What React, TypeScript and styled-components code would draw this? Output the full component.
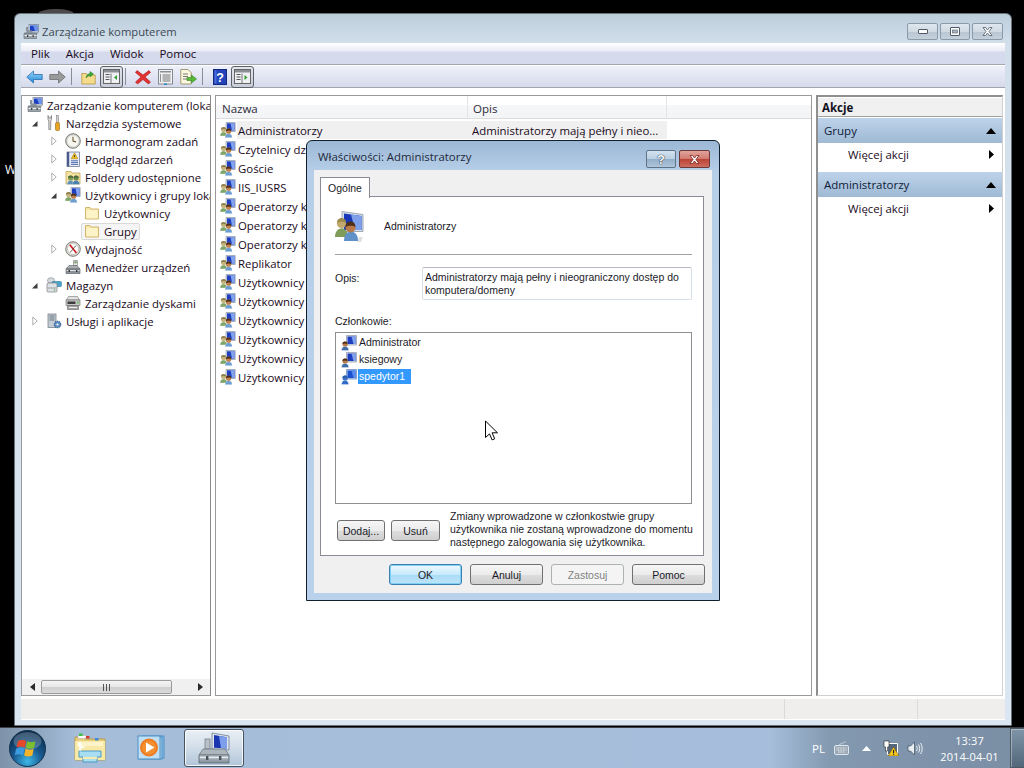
import React from "react";
import styled, { createGlobalStyle } from "styled-components";

const FONT = `"Open Sans", "Noto Sans", "Liberation Sans", sans-serif`;
const DIALOG_FONT = `"Liberation Sans", Arial, sans-serif`;

const Global = createGlobalStyle`
  html, body { margin: 0; padding: 0; background: #000; }
  body { width: 1024px; height: 768px; overflow: hidden; font-family: ${FONT}; }
`;

/* ---------- desktop ---------- */
const Desktop = styled.div`
  width: 1024px;
  height: 768px;
  position: relative;
  display: flex;
  flex-direction: column;
  background: #000;
  overflow: hidden;
`;
const Canvas = styled.div`
  flex: 1;
  position: relative;
`;
const DesktopLabel = styled.span`
  position: absolute;
  left: 5px;
  top: 162px;
  color: #fff;
  font-size: 12px;
  line-height: 16px;
`;
const HiddenShape = styled.div`
  position: absolute;
  left: 38px;
  top: 9px;
  width: 36px;
  height: 8px;
  border-radius: 18px 18px 0 0 / 5px 5px 0 0;
  background: #4a4a4a;
`;

/* ---------- main window ---------- */
const Win = styled.div`
  position: absolute;
  left: 14px;
  top: 13px;
  width: 998px;
  height: 713px;
  box-sizing: border-box;
  border: 1px solid #6b7178;
  border-radius: 6px 6px 0 0;
  background: linear-gradient(180deg, #bccdda 0, #d3e0ec 30px, #dae6f2 100%);
  padding: 0 6px 5px 6px;
  display: flex;
  flex-direction: column;
`;
const TitleBar = styled.div`
  height: 29px;
  flex: none;
  box-sizing: border-box;
  display: flex;
  align-items: flex-start;
  padding: 9px 0 0 2px;
  gap: 3px;
`;
const TitleIcon = styled.div`
  display: flex;
  margin-top: 1px;
`;
const TitleText = styled.span`
  font-size: 11.25px;
  line-height: 16px;
  margin-top: 1px;
  color: #3e4a55;
  flex: 1;
`;
const CaptionGroup = styled.div`
  display: flex;
  gap: 2px;
  margin-right: 2px;
`;
const CaptionBtn = styled.div<{ $w?: number }>`
  width: ${(p) => p.$w ?? 30}px;
  height: 17px;
  box-sizing: border-box;
  border: 1px solid #8b9aa8;
  border-radius: 2px;
  background: linear-gradient(180deg, #dfe7ee 0, #cfdae3 50%, #b9c6d2 51%, #c4d0da 100%);
  display: flex;
  align-items: center;
  justify-content: center;
`;
const Inner = styled.div`
  flex: 1;
  display: flex;
  flex-direction: column;
  background: #fff;
  min-height: 0;
`;
const MenuBar = styled.div`
  height: 22px;
  flex: none;
  display: flex;
  align-items: center;
  box-sizing: border-box;
  border-bottom: 1px solid #a3a6ad;
  background: linear-gradient(180deg, #ffffff 0, #eaecf6 8px, #d5daec 9px, #d5daec 100%);
  padding-left: 10px;
  gap: 16px;
  font-size: 11.5px;
  color: #1a0a22;
`;
const MenuItem = styled.span``;
const ToolBar = styled.div`
  height: 23px;
  flex: none;
  box-sizing: border-box;
  border-top: 1px solid #fff;
  border-bottom: 1px solid #a3a6ad;
  background: linear-gradient(180deg, #eff1f9 0, #d5daec 100%);
  display: flex;
  align-items: center;
  padding-left: 2px;
`;
const ToolBtn = styled.div<{ $on?: boolean }>`
  width: 23px;
  height: 22px;
  box-sizing: border-box;
  flex: none;
  display: flex;
  align-items: center;
  justify-content: center;
  ${(p) =>
    p.$on
      ? `border: 1px solid #5d6168; border-radius: 3px; background: linear-gradient(180deg,#e4e5ec,#c7ccd9);`
      : ""}
`;
const ToolSep = styled.div`
  width: 1px;
  height: 17px;
  flex: none;
  background: #8a8d96;
  margin: 0 5px 0 2px;
`;
const Panes = styled.div`
  flex: 1;
  min-height: 0;
  display: flex;
  padding: 7px 2px 2px 0;
  gap: 4px;
`;
const TreePane = styled.div`
  width: 190px;
  flex: none;
  box-sizing: border-box;
  border: 1px solid #9a9a9a;
  border-right-color: #8a8a8a;
  display: flex;
  flex-direction: column;
  overflow: hidden;
`;
const TreeBody = styled.div`
  flex: 1;
  overflow: hidden;
`;
const TreeRow = styled.div<{ $indent: number }>`
  height: 18px;
  display: flex;
  align-items: center;
  padding-left: ${(p) => p.$indent}px;
  white-space: nowrap;
  font-size: 11.4px;
  color: #1a0a22;
`;
const Twist = styled.div`
  width: 19px;
  flex: none;
  display: flex;
  justify-content: center;
  padding-right: 4px;
  box-sizing: border-box;
`;
const TreeNode = styled.div<{ $sel?: boolean }>`
  display: flex;
  align-items: center;
  gap: 4px;
  height: 17px;
  box-sizing: border-box;
  ${(p) =>
    p.$sel
      ? `background:#f5f5f5;border:1px solid #d9d9d9;border-radius:2px;padding:0 2px 0 2px;margin-left:-3px;`
      : ""}
`;
const HScroll = styled.div`
  height: 16px;
  flex: none;
  background: #f0f0f0;
  display: flex;
  align-items: center;
  padding: 0 1px;
`;
const ScrollEnd = styled.div`
  width: 18px;
  flex: none;
  display: flex;
  align-items: center;
  justify-content: center;
`;
const ScrollThumb = styled.div`
  width: 131px;
  height: 14px;
  flex: none;
  box-sizing: border-box;
  border: 1px solid #9b9b9b;
  border-radius: 2px;
  background: linear-gradient(180deg, #f4f4f4 0, #e6e6e6 50%, #cfcfcf 51%, #dadada 100%);
  display: flex;
  align-items: center;
  justify-content: center;
  gap: 1px;
`;
const ThumbTick = styled.i`
  width: 1px;
  height: 7px;
  background: #555;
  margin: 0 0.5px;
`;
const ScrollTrack = styled.div`
  flex: 1;
`;

const ListPane = styled.div`
  width: 597px;
  flex: none;
  box-sizing: border-box;
  border: 1px solid #9a9a9a;
  display: flex;
  flex-direction: column;
  overflow: hidden;
`;
const ListHead = styled.div`
  height: 23px;
  flex: none;
  box-sizing: border-box;
  border-bottom: 1px solid #dcdcdc;
  background: linear-gradient(180deg, #ffffff 0, #ffffff 40%, #f6f7f8 41%, #f3f4f6 100%);
  display: flex;
  font-size: 11.5px;
  color: #2c2c3a;
`;
const HeadCell = styled.div<{ $w: number; $first?: boolean }>`
  width: ${(p) => p.$w}px;
  box-sizing: border-box;
  border-right: 1px solid #e2e4e7;
  display: flex;
  align-items: center;
  padding-top: 2px;
  padding-left: ${(p) => (p.$first ? 6 : 5)}px;
`;
const ListBody = styled.div`
  padding-top: 1px;
`;
const ListRow = styled.div`
  height: 19px;
  display: flex;
  align-items: center;
  padding-left: 4px;
  font-size: 11.4px;
  color: #1a0a22;
  white-space: nowrap;
`;
const RowCells = styled.div<{ $sel?: boolean }>`
  display: flex;
  align-items: center;
  height: 18px;
  margin-left: 1px;
  padding-left: 1px;
  width: 429px;
  background: ${(p) => (p.$sel ? "#f0f0f0" : "transparent")};
`;
const NameCell = styled.span`
  width: 234px;
  flex: none;
  padding-top: 1px;
`;
const DescCell = styled.span`
  padding-top: 1px;
`;

const ActionPane = styled.div`
  flex: 1;
  box-sizing: border-box;
  border-left: 2px solid #8f8f8f;
  border-top: 2px solid #8f8f8f;
  border-right: 1px solid #d0d0d0;
  border-bottom: 1px solid #d0d0d0;
  display: flex;
  flex-direction: column;
`;
const ActionTitle = styled.div`
  margin-top: 1px;
  height: 18px;
  flex: none;
  border-bottom: 1px solid #a0a0a0;
  background: #f0f0f0;
  font-size: 11.5px;
  font-weight: 700;
  color: #101020;
  display: flex;
  align-items: center;
  padding-left: 4px;
`;
const ActionHead = styled.div<{ $mt?: number }>`
  margin-top: ${(p) => p.$mt ?? 1}px;
  height: 25px;
  flex: none;
  background: linear-gradient(180deg, #bdd3ea 0, #9fb9d4 100%);
  display: flex;
  align-items: center;
  justify-content: space-between;
  padding: 0 6px 0 6px;
  font-size: 11.5px;
  color: #10203a;
`;
const ActionItem = styled.div`
  height: 24px;
  flex: none;
  box-sizing: border-box;
  display: flex;
  align-items: center;
  justify-content: space-between;
  padding: 0 8px 2px 30px;
  font-size: 11.4px;
  color: #1a0a22;
`;
const ActionGap = styled.div`
  height: 5px;
  flex: none;
`;
const StatusBar = styled.div`
  height: 22px;
  flex: none;
  box-sizing: border-box;
  margin: 0;
  background: #f0eded;
  border-bottom: 1px solid #fff;
  border-top: 1px solid #fff;
  display: flex;
  justify-content: flex-end;
`;
const StatusCell = styled.div<{ $w: number }>`
  width: ${(p) => p.$w}px;
  box-sizing: border-box;
  border-left: 1px solid #dcd9d9;
`;

/* ---------- dialog ---------- */
const Dialog = styled.div`
  position: absolute;
  left: 306px;
  top: 140px;
  width: 414px;
  height: 461px;
  box-sizing: border-box;
  border: 1px solid #10202e;
  border-radius: 6px 6px 0 0;
  background: linear-gradient(180deg, #9cb8d5 0, #b6cee8 30px, #b9d1ea 100%);
  padding: 0 7px 7px 7px;
  display: flex;
  flex-direction: column;
  font-family: ${DIALOG_FONT};
  font-size: 10.5px;
  color: #1b1b28;
`;
const DlgTitleBar = styled.div`
  height: 29px;
  flex: none;
  display: flex;
  align-items: center;
  padding-left: 4px;
`;
const DlgTitle = styled.span`
  flex: 1;
  font-family: ${FONT};
  font-size: 11.4px;
  padding-top: 2px;
  color: #20283a;
`;
const DlgCaption = styled.div`
  display: flex;
  align-self: flex-start;
  margin-top: 9px;
  margin-right: 2px;
  gap: 3px;
`;
const DlgHelpBtn = styled.div`
  width: 30px;
  height: 18px;
  box-sizing: border-box;
  border: 1px solid #5f7286;
  border-radius: 2px;
  background: linear-gradient(180deg, #d2e2f0 0, #b9cfe2 50%, #93aec8 51%, #afc6dc 100%);
  display: flex;
  align-items: center;
  justify-content: center;
  color: #f8fafc;
  font-weight: 700;
  font-size: 13px;
  text-shadow: 0 0 1px #223, 0 0 1px #223;
`;
const DlgCloseBtn = styled.div`
  width: 31px;
  height: 18px;
  box-sizing: border-box;
  border: 1px solid #6d3a38;
  border-radius: 2px;
  background: linear-gradient(180deg, #e0a49c 0, #d07a70 50%, #bb4236 51%, #cc6d60 100%);
  display: flex;
  align-items: center;
  justify-content: center;
`;
const DlgClient = styled.div`
  flex: 1;
  min-height: 0;
  background: #f0f0f0;
  padding: 7px 6px 0 6px;
  display: flex;
  flex-direction: column;
`;
const TabRow = styled.div`
  display: flex;
  height: 20px;
  flex: none;
  position: relative;
  z-index: 1;
  margin-bottom: -1px;
`;
const Tab = styled.div`
  width: 50px;
  height: 21px;
  box-sizing: border-box;
  border: 1px solid #898c95;
  border-bottom: none;
  background: #fff;
  display: flex;
  align-items: center;
  justify-content: center;
`;
const TabPanel = styled.div`
  width: 384px;
  height: 360px;
  flex: none;
  box-sizing: border-box;
  border: 1px solid #898c95;
  background: #fff;
  padding: 13px 11px 0 14px;
  display: flex;
  flex-direction: column;
`;
const GroupHead = styled.div`
  height: 32px;
  flex: none;
  display: flex;
  align-items: center;
  gap: 17px;
`;
const Separator = styled.div`
  height: 1px;
  flex: none;
  margin-top: 12px;
  background: #a0a0a0;
`;
const DescRow = styled.div`
  display: flex;
  margin-top: 12px;
  flex: none;
`;
const FieldLabel = styled.div`
  width: 87px;
  flex: none;
  padding-top: 5px;
`;
const DescBox = styled.div`
  width: 270px;
  height: 33px;
  box-sizing: border-box;
  border: 1px solid #d9dfe6;
  border-top-color: #b5bac0;
  border-radius: 2px;
  padding: 3px 2px;
  line-height: 13px;
`;
const MembersLabel = styled.div`
  margin-top: 15px;
  height: 13px;
  line-height: 13px;
  flex: none;
`;
const MemberList = styled.div`
  margin-top: 4px;
  width: 357px;
  height: 172px;
  flex: none;
  box-sizing: border-box;
  border: 1px solid #8e8f8f;
  padding: 1px 0 0 5px;
`;
const MemberRow = styled.div`
  height: 17px;
  display: flex;
  align-items: center;
  gap: 1px;
`;
const MemberName = styled.span<{ $sel?: boolean }>`
  height: 15px;
  line-height: 15px;
  padding: 0 1px;
  ${(p) => (p.$sel ? "background:#3399ff;color:#fff;padding-right:6px;" : "")}
`;
const MemberActions = styled.div`
  display: flex;
  margin-top: 6px;
  align-items: center;
  flex: none;
`;
const SmallButtons = styled.div`
  display: flex;
  gap: 6px;
  margin-left: 2px;
  margin-top: 2px;
`;
const Note = styled.div`
  margin-left: 10px;
  width: 252px;
  flex: none;
  line-height: 13px;
`;
const Button = styled.div<{ $w?: number; $kind?: "default" | "disabled" }>`
  width: ${(p) => p.$w ?? 73}px;
  height: 21px;
  box-sizing: border-box;
  flex: none;
  border-radius: 3px;
  display: flex;
  align-items: center;
  justify-content: center;
  ${(p) =>
    p.$kind === "default"
      ? `border:1px solid #3c7fb1;background:linear-gradient(180deg,#f0f9fe 0,#c6eafc 50%,#a9dbf6 51%,#bfe5f9 100%);box-shadow:inset 0 0 0 1px #7fd0f5;`
      : p.$kind === "disabled"
      ? `border:1px solid #adb2b5;background:#f4f4f4;color:#838383;`
      : `border:1px solid #707070;background:linear-gradient(180deg,#f6f6f6 0,#ebebeb 50%,#dddddd 51%,#cfcfcf 100%);`}
`;
const DlgFooter = styled.div`
  display: flex;
  gap: 8px;
  margin-top: 8px;
  margin-left: 69px;
  flex: none;
`;
const Cursor = styled.svg`
  position: absolute;
  left: 484px;
  top: 420px;
`;

/* ---------- taskbar ---------- */
const Taskbar = styled.div`
  height: 41px;
  flex: none;
  box-sizing: border-box;
  border-top: 1px solid #3a3f45;
  background: linear-gradient(90deg, #7e93a9 0, #8ba2ba 30px, #a5bdd9 75px, #a6bedb 770px, #8399b0 830px, #7a8ea4 100%);
  display: flex;
  align-items: stretch;
  color: #fff;
`;
const StartSlot = styled.div`
  width: 59px;
  flex: none;
  display: flex;
  align-items: center;
  padding-left: 9px;
  box-sizing: border-box;
`;
const TaskSlot = styled.div<{ $active?: boolean }>`
  width: 61px;
  flex: none;
  display: flex;
  align-items: center;
  justify-content: center;
  box-sizing: border-box;
  ${(p) =>
    p.$active
      ? `width:60px;margin:1px 0 1px 3px;border:1px solid #46525e;border-radius:3px;background:linear-gradient(180deg,#e9eff5 0,#d4dfea 45%,#b1c5d9 100%);box-shadow:inset 0 0 0 1px rgba(255,255,255,.8);`
      : ""}
`;
const Tray = styled.div`
  margin-left: auto;
  display: flex;
  align-items: center;
`;
const TrayLang = styled.span`
  font-size: 11.5px;
  margin-right: 9px;
`;
const TraySlot = styled.div<{ $ml?: number }>`
  margin-left: ${(p) => p.$ml ?? 0}px;
  display: flex;
  align-items: center;
`;
const Clock = styled.div`
  width: 73px;
  margin-left: 10px;
  margin-right: 4px;
  padding-top: 2px;
  text-align: center;
  font-size: 11px;
  line-height: 16px;
  letter-spacing: 0.1px;
`;
const ShowDesktop = styled.div`
  width: 14px;
  align-self: stretch;
  flex: none;
  box-sizing: border-box;
  border: 1px solid #4c5a68;
  border-right: none;
  background: linear-gradient(180deg, #8095a8, #53677a);
  box-shadow: inset 1px 1px 0 rgba(255, 255, 255, 0.35);
`;

/* ---------- icons ---------- */
type IP = { s?: number };
const IconMgmt = ({ s = 16 }: IP) => (
  <svg width={s} height={s} viewBox="0 0 16 16">
    <rect x="6" y="0.5" width="9.5" height="7.5" fill="#dfe6f0" stroke="#6a7a90" strokeWidth=".7" />
    <path d="M7 1.5h7.5v5.5H7z" fill="#1c3fc4" />
    <path d="M10 1.5h4.5v5.5L12 7z" fill="#6f93ea" />
    <rect x="3" y="3" width="2" height="4" fill="#8a939c" />
    <path d="M4 6.5h5l1 2h5v1H1v-1h2z" fill="#8a939c" />
    <path d="M1 9.5h12.5v5H1z" fill="#9ba3aa" stroke="#5e666e" strokeWidth=".6" />
    <path d="M1.5 11.5h12" stroke="#e4e7ea" strokeWidth="1" />
    <rect x="4" y="11" width="1.3" height="2" fill="#444" />
    <rect x="9.5" y="11" width="1.3" height="2" fill="#444" />
  </svg>
);
const TaskMgmt = () => (
  <svg width={32} height={32} viewBox="0 0 32 32">
    <defs>
      <linearGradient id="boxg" x1="0" y1="0" x2="0" y2="1">
        <stop offset="0" stopColor="#c3ccd4" />
        <stop offset="1" stopColor="#7f8c98" />
      </linearGradient>
    </defs>
    <path d="M14 1l17 3v14l-17-1z" fill="#dfe6ef" stroke="#6f7f92" strokeWidth=".8" />
    <path d="M16 3l13 2.2v11.3l-13-.7z" fill="#1a36b0" />
    <path d="M21 4l8 1.2v11.3l-6-.3z" fill="#7d9feb" />
    <rect x="7" y="7" width="5" height="10" fill="#b9c1c8" stroke="#6b747c" strokeWidth=".7" />
    <path d="M5 17h22l4 6H1z" fill="#aeb6bd" stroke="#65707a" strokeWidth=".7" />
    <path d="M1 23h30v8H1z" fill="url(#boxg)" stroke="#5d6872" strokeWidth=".8" />
    <path d="M2 25.5h28" stroke="#e8ecef" strokeWidth="1.2" />
    <rect x="8" y="24" width="2.4" height="4" fill="#4a525a" />
    <rect x="21" y="24" width="2.4" height="4" fill="#4a525a" />
  </svg>
);
const IconPerson = ({ x = 0, y = 0, skin = "#c9925f", body = "#5b86c0", hair = "#5a3b22" }: { x?: number; y?: number; skin?: string; body?: string; hair?: string }) => (
  <g transform={`translate(${x} ${y})`}>
    <path d="M0 9.5c0-2.8 1.6-4.1 3.6-4.1S7.2 6.7 7.2 9.5z" fill={body} stroke="#fff" strokeWidth=".3" />
    <circle cx="3.6" cy="3" r="2.6" fill={skin} />
    <path d="M1 3C.9 1 2.4.4 3.6.4S6.3 1 6.2 3C5.2 2.2 2.2 2.2 1 3z" fill={hair} />
  </g>
);
const IconGroup = ({ s = 16 }: IP) => (
  <svg width={s} height={s} viewBox="0 0 16 16">
    <path d="M6 .5h9.2v9H6z" fill="#d8dfe9" stroke="#7a8798" strokeWidth=".6" />
    <path d="M7 1.3h7.5V8.6H7z" fill="#1f3fc0" />
    <path d="M10.5 1.3h4v7.3H12z" fill="#82a4ee" />
    <IconPerson x={0} y={4.5} skin="#c7b680" body="#7fa668" hair="#8e8050" />
    <IconPerson x={5} y={6.2} skin="#c08150" body="#6d9ed0" hair="#4a2c18" />
  </svg>
);
const IconUser = ({ s = 16 }: IP) => (
  <svg width={s} height={s} viewBox="0 0 16 16">
    <path d="M5.5.5h10v9.5h-10z" fill="#d8dfe9" stroke="#7a8798" strokeWidth=".6" />
    <path d="M6.5 1.5h8v7.5h-8z" fill="#1f3fc0" />
    <path d="M10.5 1.5h4v7.5h-2z" fill="#82a4ee" />
    <IconPerson x={0.5} y={6} skin="#b57a48" body="#3e6da8" hair="#4a2c18" />
  </svg>
);
const IconUserSel = ({ s = 16 }: IP) => (
  <svg width={s} height={s} viewBox="0 0 16 16">
    <path d="M5.5.5h10v9.5h-10z" fill="#bcd3f2" stroke="#4a70b0" strokeWidth=".6" />
    <path d="M6.5 1.5h8v7.5h-8z" fill="#1b52d0" />
    <path d="M10.5 1.5h4v7.5h-2z" fill="#5a8cee" />
    <IconPerson x={0.5} y={6} skin="#3a70c4" body="#2f6cc8" hair="#2a5aa8" />
  </svg>
);
const IconBigGroup = () => (
  <svg width={32} height={33} viewBox="0 0 32 33">
    <path d="M7 1.5l21 3v17l-21 0z" fill="#d6dfe9" stroke="#8b98a8" strokeWidth=".8" />
    <path d="M9 3.5l17.5 2.5v14H9z" fill="#1838b8" />
    <path d="M16 4.6l10.5 1.4v14H20z" fill="#7ea0ea" />
    <path d="M0 27c0-6 3.4-8.5 6.5-8.5S13 21 13 27z" fill="#7f9c5a" />
    <circle cx="6.5" cy="13.5" r="4.6" fill="#c1a86c" />
    <path d="M2 13c0-4 3-5 4.5-5S11 9 11 13c-2-1.6-6.5-1.6-9 0z" fill="#9c8a4a" />
    <path d="M9 31c0-7 3.6-9.5 7-9.5s7 2.5 7 9.5z" fill="#5f92c8" />
    <circle cx="15.5" cy="17.5" r="5" fill="#b97a4a" />
    <path d="M10.5 17c0-4.5 3.2-5.5 5-5.5s5 1 5 5.5c-2.5-1.8-7-1.8-10 0z" fill="#4e2f18" />
    <path d="M24 27h4l-2 5h-4z" fill="#000" opacity=".12" />
  </svg>
);
const IconFolder = ({ s = 16 }: IP) => (
  <svg width={s} height={s} viewBox="0 0 16 16">
    <path d="M1.5 2.5h4.5l1 1.5h7.5v10h-13z" fill="#f6e6a6" stroke="#c9a85a" strokeWidth=".8" />
    <path d="M2.3 5h11.4v8.2H2.3z" fill="#fdf3c8" />
  </svg>
);
const IconTools = () => (
  <svg width={16} height={16} viewBox="0 0 16 16">
    <path d="M2 .5l1 2.5h1.5L5.5.5v4L4.7 6v8.5H2.8V6L2 4.5z" fill="#dedede" stroke="#6e6e6e" strokeWidth=".7" />
    <rect x="10.6" y=".5" width="1.8" height="7" fill="#cfcfcf" stroke="#6e6e6e" strokeWidth=".5" />
    <rect x="9.5" y="7.5" width="4" height="8" rx="1" fill="#e8a422" stroke="#9a6a10" strokeWidth=".6" />
  </svg>
);
const IconClock = () => (
  <svg width={16} height={16} viewBox="0 0 16 16">
    <circle cx="8" cy="8" r="7.3" fill="#d0d4d0" stroke="#7c7c74" strokeWidth="1" />
    <circle cx="8" cy="8" r="5.6" fill="#f6f6ee" />
    <path d="M8 3.8V8l3 .9" fill="none" stroke="#6a5a3a" strokeWidth="1.1" />
  </svg>
);
const IconEvents = () => (
  <svg width={16} height={16} viewBox="0 0 16 16">
    <rect x="2" y="1" width="12.5" height="14.5" fill="#e8ecf4" stroke="#5f6c8c" strokeWidth=".7" />
    <rect x="2" y="1" width="2.2" height="14.5" fill="#4a5a8a" />
    <path d="M9.5 1.8l3.4 6H6.1z" fill="#f0c020" stroke="#a07a10" strokeWidth=".5" />
    <rect x="9.1" y="4" width=".8" height="2.2" fill="#222" />
    <path d="M6 9.8h7M6 11.6h7M6 13.4h7" stroke="#4f6fb0" strokeWidth="1" />
  </svg>
);
const IconShared = () => (
  <svg width={16} height={16} viewBox="0 0 16 16">
    <path d="M1 2.5h5l1 1.5h8v11H1z" fill="#f4e3a2" stroke="#c2a45a" strokeWidth=".8" />
    <IconPerson x={2} y={6} skin="#7f9c5a" body="#5f8fb8" hair="#4e6a3a" />
    <IconPerson x={7.5} y={6} skin="#6c8a50" body="#4a7fb0" hair="#4e6a3a" />
  </svg>
);
const IconPerf = () => (
  <svg width={16} height={16} viewBox="0 0 16 16">
    <circle cx="8" cy="8" r="7.3" fill="#dcdcd8" stroke="#7e7e78" strokeWidth="1" />
    <circle cx="8" cy="8" r="5.5" fill="#fbfbfb" stroke="#a8a8a0" strokeWidth=".5" />
    <path d="M4.8 3.8L11.4 12" stroke="#d01818" strokeWidth="1.6" />
    <path d="M11 4.6L5 11.6" stroke="#4a4a4a" strokeWidth=".8" />
  </svg>
);
const IconDevices = () => (
  <svg width={16} height={16} viewBox="0 0 16 16">
    <path d="M8.5 1.5h4v5h-4z" fill="#e6e6e6" stroke="#777" strokeWidth=".6" />
    <path d="M9.2 2.3h2.6v2H9.2z" fill="#7f9f6a" />
    <path d="M4 6.5h8l3 3.5H1z" fill="#a9adb2" stroke="#5e6368" strokeWidth=".6" />
    <path d="M1 10h14v4.5H1z" fill="#8d9298" stroke="#565a60" strokeWidth=".6" />
    <path d="M1.5 11.5h13" stroke="#dedfe2" strokeWidth="1" />
    <rect x="3.5" y="11" width="1.4" height="2" fill="#333" />
    <rect x="11" y="11" width="1.4" height="2" fill="#333" />
  </svg>
);
const IconStorage = () => (
  <svg width={16} height={16} viewBox="0 0 16 16">
    <ellipse cx="5" cy="3.5" rx="3.5" ry="2.8" fill="#d5dadf" stroke="#7a8088" strokeWidth=".6" />
    <rect x="6" y="4.5" width="9.5" height="5" rx="1" fill="#4aa4cc" stroke="#2f7ca0" strokeWidth=".6" />
    <rect x="1" y="6" width="10" height="9" rx="1" fill="#dfe2e4" stroke="#7a8088" strokeWidth=".7" />
    <path d="M1.5 11h9" stroke="#9aa0a6" strokeWidth="1" />
    <circle cx="8.5" cy="13" r=".8" fill="#56b050" />
  </svg>
);
const IconDisk = () => (
  <svg width={16} height={16} viewBox="0 0 16 16">
    <path d="M3.5 1.5h9l2 3.5H1.5z" fill="#e2e2e2" stroke="#767676" strokeWidth=".6" />
    <rect x="1" y="5" width="14" height="5.5" fill="#c8c8c8" stroke="#6c6c6c" strokeWidth=".6" />
    <rect x="2.5" y="6.5" width="8" height="2.5" fill="#3c3c3c" />
    <circle cx="13" cy="7.5" r=".9" fill="#4cb848" />
    <path d="M2.5 10.5h11v4h-11z" fill="#a2a2a2" stroke="#666" strokeWidth=".6" />
    <path d="M4 12.5h8" stroke="#eee" strokeWidth="1" />
  </svg>
);
const IconServices = () => (
  <svg width={16} height={16} viewBox="0 0 16 16">
    <rect x="2" y="1" width="8" height="13.5" fill="#c3ccd4" stroke="#6b7680" strokeWidth=".7" />
    <path d="M3.5 3h5M3.5 5h5M3.5 7h5" stroke="#6b7680" strokeWidth="1" />
    <circle cx="11.5" cy="11.5" r="3.2" fill="#5c8fc4" stroke="#3a628e" strokeWidth="1.3" strokeDasharray="1.2 .8" />
    <circle cx="11.5" cy="11.5" r="1.1" fill="#fff" />
  </svg>
);
const ArrowOpen = () => (
  <svg width={7} height={7} viewBox="0 0 7 7">
    <path d="M6.5 1v5.5H1z" fill="#3c3c3c" />
  </svg>
);
const ArrowClosed = () => (
  <svg width={6} height={10} viewBox="0 0 6 10">
    <path d="M.8 1L5.2 5 .8 9z" fill="#fff" stroke="#a6a6a6" strokeWidth=".9" />
  </svg>
);
const NavArrow = ({ left }: { left?: boolean }) => (
  <svg width={5} height={8} viewBox="0 0 5 8">
    <path d={left ? "M5 0v8L0 4z" : "M0 0v8l5-4z"} fill="#2a2a2a" />
  </svg>
);
const CollapseUp = () => (
  <svg width={10} height={6} viewBox="0 0 10 6">
    <path d="M5 0l5 6H0z" fill="#000" />
  </svg>
);
const MoreArrow = () => (
  <svg width={5} height={9} viewBox="0 0 5 9">
    <path d="M0 0l5 4.5L0 9z" fill="#000" />
  </svg>
);

const ToolBack = () => (
  <svg width={17} height={14} viewBox="0 0 17 14">
    <defs>
      <linearGradient id="bk" x1="0" y1="0" x2="0" y2="1">
        <stop offset="0" stopColor="#9fd8f8" />
        <stop offset="1" stopColor="#1b86d8" />
      </linearGradient>
    </defs>
    <path d="M.8 7L7.5 1v3.5h8.7v5H7.5V13z" fill="url(#bk)" stroke="#2a6fb0" strokeWidth=".8" />
  </svg>
);
const ToolForward = () => (
  <svg width={17} height={14} viewBox="0 0 17 14">
    <path d="M16.2 7L9.5 1v3.5H.8v5h8.7V13z" fill="#9a9a9a" stroke="#6c6c6c" strokeWidth=".8" />
  </svg>
);
const ToolUp = () => (
  <svg width={15} height={16} viewBox="0 0 15 16">
    <path d="M.8 4.5h4.4l1 1.5h8v9H.8z" fill="#f4dc8c" stroke="#b89440" strokeWidth=".8" />
    <path d="M5 9c.5-3 2-4 4-4.5V2.5L12.5 5 9 8V6.2C7.8 6.6 6.5 7.4 5 9z" fill="#3ca83c" stroke="#237a23" strokeWidth=".5" />
  </svg>
);
const ToolPane = ({ right }: { right?: boolean }) => (
  <svg width={17} height={15} viewBox="0 0 17 15">
    <rect x=".5" y=".5" width="16" height="14" fill="#eef0f3" stroke="#666" />
    <rect x="1" y="1" width="15" height="2.5" fill="#8b8f96" />
    <rect x="2.5" y="5" width="4" height="1" fill="#555" />
    <rect x="2.5" y="7.5" width="4" height="1" fill="#555" />
    <rect x="2.5" y="10" width="4" height="1" fill="#555" />
    <path d="M8 4.5V14" stroke="#777" />
    <path d={right ? "M10.5 6v5l3-2.5z" : "M14 6v5l-3-2.5z"} fill="#30a030" />
  </svg>
);
const ToolDelete = () => (
  <svg width={16} height={16} viewBox="0 0 16 16">
    <path d="M2 1.5l6 4.5 6-4.5 1.5 2L10 8l5.5 5-2 2L8 10.5 2.5 15l-2-2L6 8 .5 3.5z" fill="#e23232" stroke="#a81414" strokeWidth=".6" />
  </svg>
);
const ToolProps = () => (
  <svg width={15} height={16} viewBox="0 0 15 16">
    <rect x=".5" y=".5" width="14" height="14.5" fill="#f0f2f4" stroke="#85888e" />
    <rect x="2" y="2" width="11" height="1.5" fill="#8a8d94" />
    <path d="M4.5 6h8M4.5 8h8M4.5 10h8M4.5 12h8" stroke="#777" />
    <path d="M2 6h1M2 8h1M2 10h1M2 12h1" stroke="#333" />
    <rect x="6" y="14.5" width="3" height="1.5" fill="#2a8ac8" />
  </svg>
);
const ToolExport = () => (
  <svg width={17} height={16} viewBox="0 0 17 16">
    <path d="M.8.5H8l3.2 3.2V15H.8z" fill="#fdf8e0" stroke="#a29a72" />
    <path d="M3 5h5M3 7.5h5M3 10h4" stroke="#777" />
    <path d="M7 8.5h4.5V6l5 4-5 4v-2.5H7z" fill="#58b838" stroke="#2f8420" strokeWidth=".6" />
  </svg>
);
const ToolHelp = () => (
  <svg width={14} height={16} viewBox="0 0 14 16">
    <rect x=".5" y=".5" width="13" height="15" fill="#2244b8" stroke="#0f2a80" />
    <rect x="1.5" y="1.5" width="2" height="13" fill="#4a6cd8" />
    <text x="7" y="12.8" fontFamily="Liberation Sans" fontWeight="700" fontSize="12.5" textAnchor="middle" fill="#fff">?</text>
  </svg>
);
const CaptionMin = () => (
  <svg width={10} height={5} viewBox="0 0 10 5">
    <rect x=".5" y=".5" width="9" height="4" rx=".5" fill="#fff" stroke="#4f5a66" />
  </svg>
);
const CaptionMax = () => (
  <svg width={10} height={9} viewBox="0 0 10 9">
    <rect x=".5" y=".5" width="9" height="8" rx=".5" fill="#fff" stroke="#4f5a66" />
    <rect x="2.5" y="3" width="5" height="3" fill="#aab6c2" stroke="#4f5a66" strokeWidth=".6" />
  </svg>
);
const CaptionClose = ({ c = "#4f5a66" }: { c?: string }) => (
  <svg width={11} height={9} viewBox="0 0 11 9">
    <path d="M1 .5h2.6L5.5 3 7.4.5H10L7 4.5 10 8.5H7.4L5.5 6 3.6 8.5H1L4 4.5z" fill="#fff" stroke={c} strokeWidth=".8" />
  </svg>
);

const Orb = () => (
  <svg width={37} height={37} viewBox="0 0 37 37">
    <defs>
      <radialGradient id="orb" cx=".5" cy=".85" r=".8">
        <stop offset="0" stopColor="#3fb8e8" />
        <stop offset=".5" stopColor="#17598f" />
        <stop offset="1" stopColor="#0c2c4c" />
      </radialGradient>
    </defs>
    <circle cx="18.5" cy="18.5" r="18" fill="url(#orb)" stroke="#12324e" />
    <ellipse cx="18.5" cy="11" rx="14" ry="9" fill="#fff" opacity=".22" />
    <path d="M9 11c3-1.5 5.5-1.3 8.2 0l-1.4 6.6c-2.7-1.2-5.2-1.4-8.3 0z" fill="#e6482a" />
    <path d="M18.2 11.2c2.8 1.3 5.3 1.4 8.2 0l-1.4 6.6c-2.8 1.3-5.4 1.2-8.2 0z" fill="#7cc02e" />
    <path d="M7.2 18.6c3-1.4 5.5-1.2 8.3 0l-1.4 6.6c-2.8-1.2-5.4-1.4-8.4 0z" fill="#3c9ae0" />
    <path d="M16.5 18.8c2.8 1.2 5.4 1.3 8.2 0l-1.4 6.6c-2.8 1.4-5.4 1.2-8.2 0z" fill="#f8b428" />
  </svg>
);
const TaskExplorer = () => (
  <svg width={32} height={31} viewBox="0 0 32 31">
    <path d="M1 4h9l1 2h20v21H1z" fill="#e9cf7e" stroke="#b89a4e" />
    <rect x="4" y="2.5" width="8" height="3" fill="#fdfdfd" stroke="#aaa" strokeWidth=".5" />
    <rect x="5" y="0.5" width="3.5" height="2.5" fill="#3cc048" />
    <rect x="12" y="3" width="3.5" height="2.5" fill="#d83c30" />
    <rect x="21" y="5" width="3.5" height="2.5" fill="#3c8ce0" />
    <path d="M1 8h30v19H1z" fill="#f9e9a6" />
    <path d="M3 9h26v4H3z" fill="#fff4c9" />
    <path d="M5 24V18h22v6h-4v5H9v-5z" fill="#a9def2" stroke="#4c9ac4" />
    <path d="M9 24h14v2H9z" fill="#f7e8ae" />
    <path d="M4 11l2 8 2-4 5-1-5-1-2-5z" fill="#fff" opacity=".85" />
  </svg>
);
const TaskPlayer = () => (
  <svg width={28} height={26} viewBox="0 0 28 26">
    <rect x="5" y="1" width="22" height="22" fill="#8fc0e4" stroke="#4c90c4" />
    <rect x="3" y="2" width="22" height="22" fill="#a8d0ec" stroke="#4c90c4" />
    <rect x="1" y="1" width="22" height="23" fill="#bfe0f4" stroke="#4c90c4" />
    <circle cx="12" cy="12.5" r="9" fill="#f07a20" />
    <circle cx="12" cy="12.5" r="7" fill="#f29030" />
    <path d="M9 7.5l8.5 5-8.5 5z" fill="#fff" />
  </svg>
);
const TrayKeyboard = () => (
  <svg width={15} height={14} viewBox="0 0 15 14">
    <path d="M5 4c1-1.5 3-1 4-2s2-1 3-1" fill="none" stroke="#cdd6de" strokeWidth=".9" />
    <rect x=".5" y="4.5" width="14" height="9" rx="1.5" fill="#9aa8b6" stroke="#dfe5ea" />
    <path d="M2.5 7h10M2.5 9h10M4 11h7" stroke="#eef2f5" strokeWidth="1" strokeDasharray="1 .6" />
  </svg>
);
const TrayCaret = () => (
  <svg width={9} height={5} viewBox="0 0 9 5">
    <path d="M4.5 0L9 5H0z" fill="#fff" />
  </svg>
);
const TrayNetwork = () => (
  <svg width={16} height={16} viewBox="0 0 16 16">
    <path d="M4.5 3.5h10v11h-10z" fill="#56697c" stroke="#fff" strokeWidth="1" />
    <path d="M1 1h5v6H4.5v4H2.5V7H1z" fill="#fff" stroke="#222" strokeWidth=".6" />
    <path d="M10.5 7L16 16H5z" fill="#f6c820" stroke="#7c5c08" strokeWidth=".6" />
    <rect x="10" y="10" width="1.2" height="3" fill="#222" />
    <rect x="10" y="13.6" width="1.2" height="1.2" fill="#222" />
  </svg>
);
const TraySpeaker = () => (
  <svg width={16} height={15} viewBox="0 0 16 15">
    <path d="M1 5h2.5L7.5 1v13L3.5 10H1z" fill="#e9eef2" stroke="#3c4c5c" strokeWidth=".7" />
    <path d="M9.5 5c1 1.5 1 3.5 0 5M11.5 3.5c1.6 2.4 1.6 5.6 0 8M13.5 2c2.2 3.2 2.2 7.8 0 11" fill="none" stroke="#f2f5f8" strokeWidth="1" />
  </svg>
);

/* ---------- data ---------- */
const groups = [
  "Administratorzy",
  "Czytelnicy dzienników zdarzeń",
  "Goście",
  "IIS_IUSRS",
  "Operatorzy kopii zapasowych",
  "Operatorzy konfiguracji sieci",
  "Operatorzy kryptograficzni",
  "Replikator",
  "Użytkownicy",
  "Użytkownicy DCOM",
  "Użytkownicy dziennika wydajności",
  "Użytkownicy monitora wydajności",
  "Użytkownicy pulpitu zdalnego",
  "Użytkownicy zaawansowani",
];

type TreeItem = {
  label: string;
  indent: number;
  icon: React.ReactNode;
  twist?: "open" | "closed" | "none";
  sel?: boolean;
};
const tree: TreeItem[] = [
  { label: "Zarządzanie komputerem (lokalne)", indent: 5, icon: <IconMgmt /> },
  { label: "Narzędzia systemowe", indent: 5, icon: <IconTools />, twist: "open" },
  { label: "Harmonogram zadań", indent: 24, icon: <IconClock />, twist: "closed" },
  { label: "Podgląd zdarzeń", indent: 24, icon: <IconEvents />, twist: "closed" },
  { label: "Foldery udostępnione", indent: 24, icon: <IconShared />, twist: "closed" },
  { label: "Użytkownicy i grupy lokalne", indent: 24, icon: <IconGroup />, twist: "open" },
  { label: "Użytkownicy", indent: 43, icon: <IconFolder />, twist: "none" },
  { label: "Grupy", indent: 43, icon: <IconFolder />, twist: "none", sel: true },
  { label: "Wydajność", indent: 24, icon: <IconPerf />, twist: "closed" },
  { label: "Menedżer urządzeń", indent: 24, icon: <IconDevices />, twist: "none" },
  { label: "Magazyn", indent: 5, icon: <IconStorage />, twist: "open" },
  { label: "Zarządzanie dyskami", indent: 24, icon: <IconDisk />, twist: "none" },
  { label: "Usługi i aplikacje", indent: 5, icon: <IconServices />, twist: "closed" },
];

export default function App() {
  return (
    <Desktop>
      <Global />
      <Canvas>
        <HiddenShape />
        <DesktopLabel>W</DesktopLabel>
        <Win>
          <TitleBar>
            <TitleIcon><IconMgmt /></TitleIcon>
            <TitleText>Zarządzanie komputerem</TitleText>
            <CaptionGroup>
              <CaptionBtn $w={31}><CaptionMin /></CaptionBtn>
              <CaptionBtn $w={30}><CaptionMax /></CaptionBtn>
              <CaptionBtn $w={31}><CaptionClose /></CaptionBtn>
            </CaptionGroup>
          </TitleBar>
          <Inner>
            <MenuBar>
              <MenuItem>Plik</MenuItem>
              <MenuItem>Akcja</MenuItem>
              <MenuItem>Widok</MenuItem>
              <MenuItem>Pomoc</MenuItem>
            </MenuBar>
            <ToolBar>
              <ToolBtn><ToolBack /></ToolBtn>
              <ToolBtn><ToolForward /></ToolBtn>
              <ToolSep />
              <ToolBtn><ToolUp /></ToolBtn>
              <ToolBtn $on><ToolPane /></ToolBtn>
              <ToolSep />
              <ToolBtn><ToolDelete /></ToolBtn>
              <ToolBtn><ToolProps /></ToolBtn>
              <ToolBtn><ToolExport /></ToolBtn>
              <ToolSep />
              <ToolBtn><ToolHelp /></ToolBtn>
              <ToolBtn $on><ToolPane right /></ToolBtn>
            </ToolBar>
            <Panes>
              <TreePane>
                <TreeBody>
                  {tree.map((t) => (
                    <TreeRow key={t.label} $indent={t.indent}>
                      {t.twist && (
                        <Twist>
                          {t.twist === "open" && <ArrowOpen />}
                          {t.twist === "closed" && <ArrowClosed />}
                        </Twist>
                      )}
                      <TreeNode $sel={t.sel}>
                        {t.icon}
                        <span>{t.label}</span>
                      </TreeNode>
                    </TreeRow>
                  ))}
                </TreeBody>
                <HScroll>
                  <ScrollEnd><NavArrow left /></ScrollEnd>
                  <ScrollThumb>
                    <ThumbTick /><ThumbTick /><ThumbTick />
                  </ScrollThumb>
                  <ScrollTrack />
                  <ScrollEnd><NavArrow /></ScrollEnd>
                </HScroll>
              </TreePane>
              <ListPane>
                <ListHead>
                  <HeadCell $w={252} $first>Nazwa</HeadCell>
                  <HeadCell $w={199}>Opis</HeadCell>
                </ListHead>
                <ListBody>
                  {groups.map((g, i) => (
                    <ListRow key={g}>
                      <IconGroup />
                      <RowCells $sel={i === 0}>
                        <NameCell>{g}</NameCell>
                        {i === 0 && <DescCell>Administratorzy mają pełny i nieo...</DescCell>}
                      </RowCells>
                    </ListRow>
                  ))}
                </ListBody>
              </ListPane>
              <ActionPane>
                <ActionTitle>Akcje</ActionTitle>
                <ActionHead>Grupy<CollapseUp /></ActionHead>
                <ActionItem>Więcej akcji<MoreArrow /></ActionItem>
                <ActionGap />
                <ActionHead $mt={0}>Administratorzy<CollapseUp /></ActionHead>
                <ActionItem>Więcej akcji<MoreArrow /></ActionItem>
              </ActionPane>
            </Panes>
            <StatusBar>
              <StatusCell $w={133} />
              <StatusCell $w={88} />
            </StatusBar>
          </Inner>
        </Win>

        <Dialog>
          <DlgTitleBar>
            <DlgTitle>Właściwości: Administratorzy</DlgTitle>
            <DlgCaption>
              <DlgHelpBtn>?</DlgHelpBtn>
              <DlgCloseBtn><CaptionClose c="#7a2018" /></DlgCloseBtn>
            </DlgCaption>
          </DlgTitleBar>
          <DlgClient>
            <TabRow><Tab>Ogólne</Tab></TabRow>
            <TabPanel>
              <GroupHead>
                <IconBigGroup />
                <span>Administratorzy</span>
              </GroupHead>
              <Separator />
              <DescRow>
                <FieldLabel>Opis:</FieldLabel>
                <DescBox>Administratorzy mają pełny i nieograniczony dostęp do komputera/domeny</DescBox>
              </DescRow>
              <MembersLabel>Członkowie:</MembersLabel>
              <MemberList>
                <MemberRow><IconUser /><MemberName>Administrator</MemberName></MemberRow>
                <MemberRow><IconUser /><MemberName>ksiegowy</MemberName></MemberRow>
                <MemberRow><IconUserSel /><MemberName $sel>spedytor1</MemberName></MemberRow>
              </MemberList>
              <MemberActions>
                <SmallButtons>
                  <Button $w={48}>Dodaj...</Button>
                  <Button $w={49}>Usuń</Button>
                </SmallButtons>
                <Note>
                  Zmiany wprowadzone w członkostwie grupy użytkownika nie zostaną wprowadzone do momentu następnego zalogowania się użytkownika.
                </Note>
              </MemberActions>
            </TabPanel>
            <DlgFooter>
              <Button $kind="default">OK</Button>
              <Button>Anuluj</Button>
              <Button $kind="disabled">Zastosuj</Button>
              <Button>Pomoc</Button>
            </DlgFooter>
          </DlgClient>
        </Dialog>
        <Cursor width={16} height={22} viewBox="0 0 16 22">
          <path d="M1.5 1v16.5l4-3.6 2.6 6 2.6-1.1-2.6-6h5.4z" fill="#fff" stroke="#000" strokeWidth="1" />
        </Cursor>
      </Canvas>
      <Taskbar>
        <StartSlot><Orb /></StartSlot>
        <TaskSlot><TaskExplorer /></TaskSlot>
        <TaskSlot><TaskPlayer /></TaskSlot>
        <TaskSlot $active><TaskMgmt /></TaskSlot>
        <Tray>
          <TrayLang>PL</TrayLang>
          <TraySlot><TrayKeyboard /></TraySlot>
          <TraySlot $ml={13}><TrayCaret /></TraySlot>
          <TraySlot $ml={12}><TrayNetwork /></TraySlot>
          <TraySlot $ml={8}><TraySpeaker /></TraySlot>
          <Clock>13:37<br />2014-04-01</Clock>
          <ShowDesktop />
        </Tray>
      </Taskbar>
    </Desktop>
  );
}
